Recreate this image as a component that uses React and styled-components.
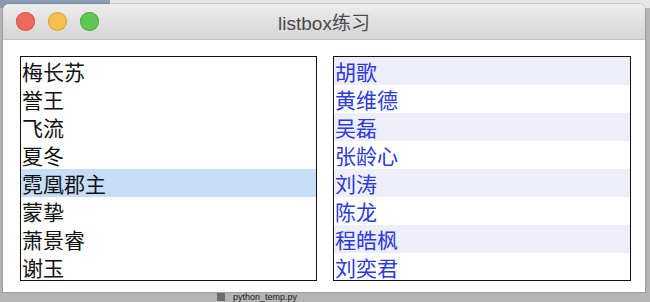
import React from "react";
import styled, { createGlobalStyle } from "styled-components";

const leftNames = ["梅长苏", "誉王", "飞流", "夏冬", "霓凰郡主", "蒙挚", "萧景睿", "谢玉"];
const rightNames = ["胡歌", "黄维德", "吴磊", "张龄心", "刘涛", "陈龙", "程皓枫", "刘奕君"];

const Global = createGlobalStyle`
  html, body {
    margin: 0;
    padding: 0;
  }
  body {
    width: 650px;
    height: 302px;
    overflow: hidden;
    font-family: "Noto Sans CJK SC", "Noto Sans", sans-serif;
  }
`;

const Desktop = styled.div`
  width: 650px;
  height: 302px;
  box-sizing: border-box;
  padding: 4px 5px 0 3px;
  display: flex;
  flex-direction: column;
  background:
    linear-gradient(to right, #8b9bb3 0, #8b9bb3 110px, #e6e6e6 110px, #e6e6e6 100%) top / 100% 8px no-repeat,
    #b4b4b4;
  overflow: hidden;
`;

const Window = styled.div`
  height: 288px;
  display: flex;
  flex-direction: column;
  background: #fff;
  border-radius: 6px 6px 0 0;
  box-shadow: 0 0 0 1px rgba(0, 0, 0, 0.12);
  overflow: hidden;
`;

const TitleBar = styled.div`
  height: 36px;
  flex-shrink: 0;
  display: flex;
  align-items: center;
  position: relative;
  padding-left: 13px;
  gap: 13px;
  background: linear-gradient(#ededed, #d5d5d5);
  border-bottom: 1px solid #c4c4c4;
  box-sizing: border-box;
`;

const Light = styled.span`
  width: 19px;
  height: 19px;
  border-radius: 50%;
  background: ${(p) => p.color};
  box-shadow: inset 0 0 0 1px ${(p) => p.edge};
`;

const Title = styled.div`
  position: absolute;
  left: 0;
  right: 0;
  text-align: center;
  font-family: "Liberation Sans", "Noto Sans CJK SC", sans-serif;
  font-size: 19px;
  color: #4a4a4a;
  pointer-events: none;
`;

const Body = styled.div`
  flex: 1;
  display: flex;
  gap: 16px;
  padding: 16px 14px 0 17px;
`;

const ListBox = styled.ul`
  list-style: none;
  margin: 0;
  padding: 0;
  width: ${(p) => p.w}px;
  height: 225px;
  box-sizing: border-box;
  border: 1px solid #111;
  overflow: hidden;
`;

const Item = styled.li`
  height: 28px;
  line-height: 28px;
  padding-left: 1px;
  font-size: 21px;
  color: ${(p) => (p.blue ? "#2b3adc" : "#111")};
  background: ${(p) => (p.selected ? "#c6ddf7" : p.stripe ? "#eeeefb" : "transparent")};
  white-space: nowrap;
`;

const Bottom = styled.div`
  height: 10px;
  display: flex;
  align-items: center;
  padding-left: 214px;
  gap: 8px;
  overflow: hidden;
`;

const FileMark = styled.span`
  width: 8px;
  height: 8px;
  background: #6d6d6d;
`;

const FileName = styled.span`
  font-family: "Liberation Sans", sans-serif;
  font-size: 9px;
  line-height: 10px;
  color: #222;
`;

export default function App() {
  return (
    <Desktop>
      <Global />
      <Window>
        <TitleBar>
          <Light color="#ee6a5f" edge="#d9564b" />
          <Light color="#f5bf4f" edge="#dea73a" />
          <Light color="#62c655" edge="#52ac47" />
          <Title>listbox练习</Title>
        </TitleBar>
        <Body>
          <ListBox w={297}>
            {leftNames.map((n, i) => (
              <Item key={n} selected={i === 4}>
                {n}
              </Item>
            ))}
          </ListBox>
          <ListBox w={298}>
            {rightNames.map((n, i) => (
              <Item key={n} blue stripe={i % 2 === 0}>
                {n}
              </Item>
            ))}
          </ListBox>
        </Body>
      </Window>
      <Bottom>
        <FileMark />
        <FileName>python_temp.py</FileName>
      </Bottom>
    </Desktop>
  );
}
